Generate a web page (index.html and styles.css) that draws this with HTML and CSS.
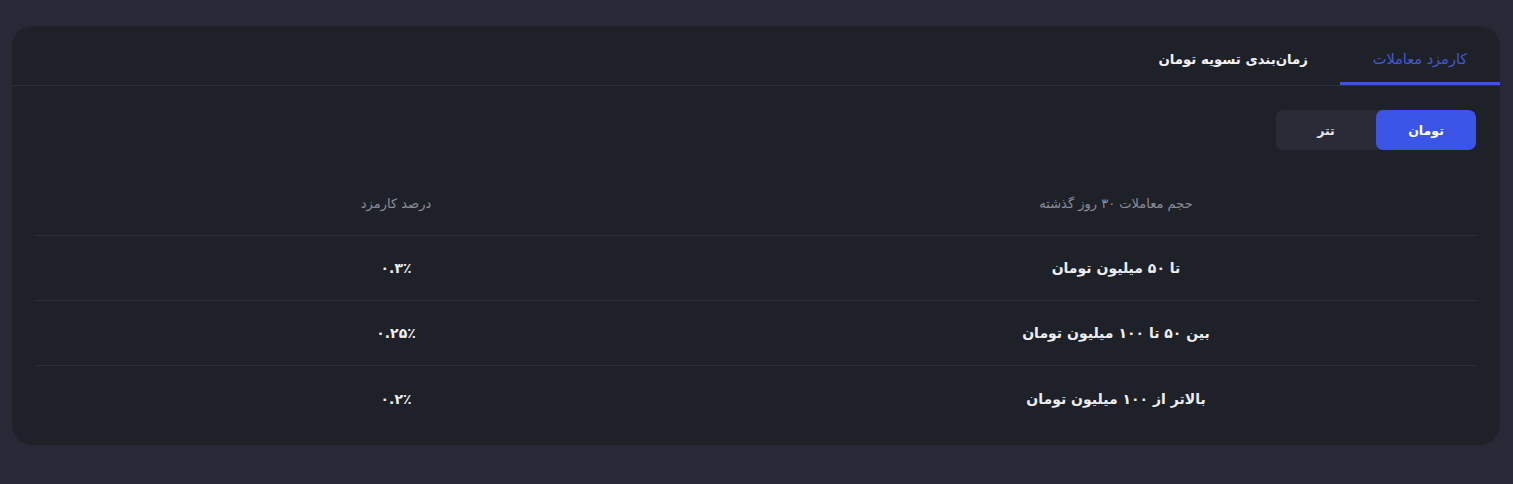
FILE: index.html
```html
<!DOCTYPE html>
<html lang="fa" dir="rtl">
<head>
<meta charset="utf-8">
<title>کارمزد</title>
<link rel="stylesheet" href="styles.css">
</head>
<body>
<div class="card">
  <div class="tabs">
    <div class="tab active">کارمزد معاملات</div>
    <div class="tab">زمان‌بندی تسویه تومان</div>
  </div>
  <div class="content">
    <div class="toggle">
      <div class="opt on">تومان</div>
      <div class="opt">تتر</div>
    </div>
    <div class="table">
      <div class="row head">
        <div class="cell">حجم معاملات ۳۰ روز گذشته</div>
        <div class="cell">درصد کارمزد</div>
      </div>
      <div class="row">
        <div class="cell">تا ۵۰ میلیون تومان</div>
        <div class="cell">۰.۳٪</div>
      </div>
      <div class="row">
        <div class="cell">بین ۵۰ تا ۱۰۰ میلیون تومان</div>
        <div class="cell">۰.۲۵٪</div>
      </div>
      <div class="row">
        <div class="cell">بالاتر از ۱۰۰ میلیون تومان</div>
        <div class="cell">۰.۲٪</div>
      </div>
    </div>
  </div>
</div>
</body>
</html>
```
FILE: styles.css
```css
html, body {
  margin: 0;
  padding: 0;
}
body {
  background: #272a36;
  font-family: "DejaVu Sans", "Noto Sans", sans-serif;
  color: #e4e5ea;
  padding: 26px 13px 0 12px;
}
.card {
  background: #1f2129;
  border-radius: 20px;
  height: 419px;
  box-sizing: border-box;
}
.tabs {
  display: flex;
  height: 60px;
  border-bottom: 1px solid #2e313c;
  box-sizing: border-box;
}
.tab {
  display: flex;
  align-items: center;
  justify-content: center;
  font-size: 14.5px;
  color: #f2f3f6;
  box-sizing: border-box;
  padding-top: 10px;
  border-bottom: 3px solid transparent;
}
.tab.active {
  width: 160px;
  color: #4458d6;
  border-bottom-color: #3f55e0;
}
.tab:not(.active) {
  padding: 10px 32px 0 32px;
  font-weight: bold;
  font-size: 13.3px;
}
.content {
  padding: 24px 24px 0 24px;
}
.toggle {
  display: flex;
  width: 200px;
  height: 40px;
  background: #292c37;
  border-radius: 7px;
  overflow: hidden;
}
.opt {
  flex: 1;
  display: flex;
  align-items: center;
  justify-content: center;
  font-size: 12.5px;
  font-weight: bold;
  color: #e8e9ee;
}
.opt.on {
  background: #3b55e9;
  border-radius: 7px;
  color: #ffffff;
}
.table {
  margin-top: 30px;
}
.row {
  display: grid;
  grid-template-columns: 1fr 1fr;
  height: 65px;
  box-sizing: border-box;
  align-items: center;
  border-bottom: 1px solid #2e313c;
  font-size: 14px;
  font-weight: bold;
  color: #eceef2;
}
.row:last-child {
  border-bottom: none;
}
.row.head {
  height: 56px;
  padding-bottom: 8px;
  font-size: 13px;
  font-weight: normal;
  color: #8a8d98;
}
.cell {
  text-align: center;
}
```
